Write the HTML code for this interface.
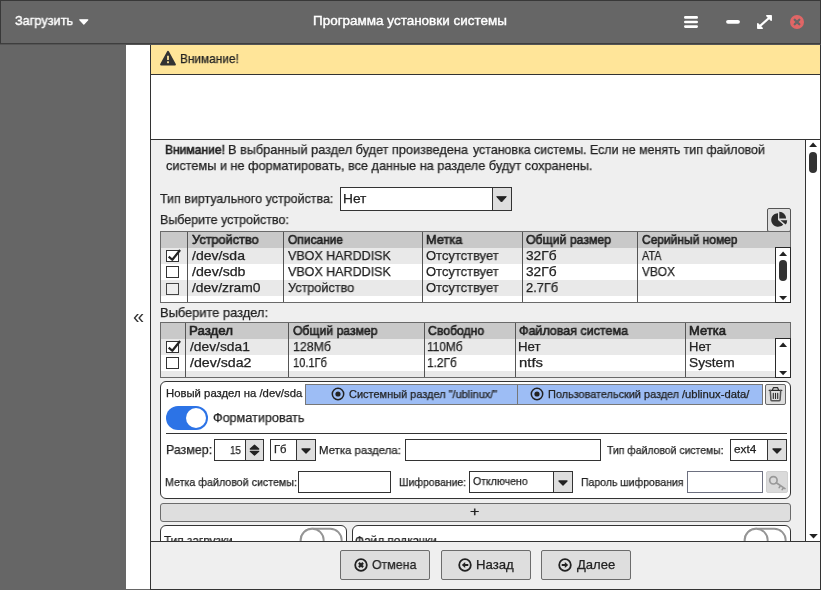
<!DOCTYPE html>
<html lang="ru"><head><meta charset="utf-8"><title>Программа установки системы</title>
<style>
*{box-sizing:border-box;margin:0;padding:0}
html,body{width:821px;height:590px;overflow:hidden;background:#666}
body{font-family:"Liberation Sans",sans-serif;font-size:13px;color:#222;position:relative}
.a{position:absolute;white-space:nowrap}
.t{position:absolute;white-space:nowrap;will-change:transform;line-height:16px;height:16px;transform-origin:0 50%;-webkit-text-stroke:0.25px currentColor}
#tb{left:0;top:0;width:821px;height:44px;background:#666;border:1px solid #383838;border-bottom-color:#3e3e3e}
#tb2{left:0;top:44px;width:821px;height:1px;background:#555}
#gap{left:126px;top:45px;width:24px;height:544px;background:#fff}
#main{left:150px;top:45px;width:671px;height:545px;background:#efefef;border:1px solid #333;border-top:0}
#warn{left:151px;top:45px;width:669px;height:30px;background:#ffe599;border-bottom:1px solid #333}
#white{left:151px;top:75px;width:669px;height:65px;background:#fff;border-bottom:1px solid #333}
#sb{left:805px;top:140px;width:15px;height:402px;background:#fff;border-left:1px solid #333}
#foot{left:151px;top:541px;width:669px;height:48px;background:#efefef;border-top:1px solid #333}
.btn{position:absolute;background:#dedede;border:1px solid #6c6c6c;border-radius:2px}
.inp{position:absolute;background:#fff;border:1px solid #333}
.cb{position:absolute;background:#dedede;border-left:1px solid #333;right:0;top:0;bottom:0}
.tbl{position:absolute;background:#fff;border:1px solid #6a6a6a}
.hd{position:absolute;background:#c9c9c9;left:0;right:0;top:0;height:16px}
.rw{position:absolute;background:#e9e9e9;left:0;right:0;height:16px}
.vl{position:absolute;top:0;bottom:0;width:1px;background:#555}
.card{position:absolute;background:#fff;border:1px solid #333;border-radius:6px}
.chk{position:absolute;width:13px;height:12px;border:1px solid #333;background:#fff}
svg{position:absolute;overflow:visible}
</style></head><body>
<div class="a" id="gap"></div>
<div class="a" id="main"></div>

<!-- titlebar -->
<div class="a" id="tb"></div><div class="a" id="tb2"></div>
<svg style="left:79px;top:19px" width="10" height="6"><path d="M0.800 0.800h8l-4 4.200z" fill="#fff" stroke="#fff" stroke-linejoin="round" stroke-width="1.200"/></svg>
<svg style="left:684px;top:15px" width="14" height="14"><path d="M1.300 2.400h11.400M1.300 7h11.400M1.300 11.600h11.400" stroke="#fff" stroke-width="2.600" stroke-linecap="round"/></svg>
<svg style="left:726px;top:19px" width="14" height="6"><path d="M2 2.800h10" stroke="#fff" stroke-width="3.800" stroke-linecap="round"/></svg>
<svg style="left:757px;top:15px" width="15" height="14"><path d="M9.800 0.800h4.400v4.400zM0.800 13.200v-4.400l4.400 4.400z" fill="#fff" stroke="#fff" stroke-width="1.500" stroke-linejoin="round"/><path d="M12 3l-9 8" stroke="#fff" stroke-width="2.300"/></svg>
<svg style="left:790px;top:15px" width="14" height="14"><circle cx="7" cy="7" r="7" fill="#e06666"/><path d="M4.700 4.700l4.600 4.600M9.300 4.700l-4.600 4.600" stroke="#666" stroke-width="2.300" stroke-linecap="round"/></svg>

<!-- warning -->
<div class="a" id="warn"></div>
<svg style="left:160px;top:50px" width="16" height="16"><path d="M8 2L14.800 14.500H1.200z" fill="#333" stroke="#333" stroke-width="2.200" stroke-linejoin="round"/><path d="M8 5.800v4.200" stroke="#ffe599" stroke-width="1.800"/><rect x="7.100" y="11.300" width="1.800" height="1.900" fill="#ffe599"/></svg>
<div class="a" id="white"></div>

<!-- combo 1 -->
<div class="inp" style="left:340px;top:187px;width:172px;height:24px"><div class="cb" style="width:19px"></div>
<svg style="right:4px;top:8px" width="11" height="7"><path d="M0.700 0.700h9.600l-4.800 5.300z" fill="#222" stroke="#222" stroke-linejoin="round"/></svg></div>
<div class="btn" style="left:767px;top:208px;width:24px;height:24px;border-color:#555"></div>
<svg style="left:0;top:0" width="821" height="590"><g fill="#2b2b2b"><path d="M778 220V213.200A6.800 6.800 0 1 0 783.200 224.400z"/><path d="M779.300 218.600V211.800A6.800 6.800 0 0 1 786.100 218.600z"/><path d="M780.500 220.200H787.200A6.800 6.800 0 0 1 785.600 224.600z"/></g></svg>

<!-- table 1 -->
<div class="tbl" id="t1" style="left:160px;top:231px;width:631px;height:72px">
  <div class="hd"></div>
  <div class="rw" style="top:16px"></div><div class="rw" style="top:48px"></div>
  <div class="vl" style="left:26px"></div><div class="vl" style="left:122px"></div><div class="vl" style="left:261px"></div><div class="vl" style="left:361px"></div><div class="vl" style="left:476px"></div>
  <div class="a" style="right:-1px;top:15px;bottom:-1px;width:16px;background:#fff;border:1px solid #2a2a2a"></div>
  <svg style="right:2.500px;top:18.500px" width="9" height="6"><path d="M0.100 4.900l4-4.300 4 4.300z" fill="#222"/></svg>
  <div class="a" style="right:3px;top:28px;width:8px;height:21px;background:#333;border-radius:4px"></div>
  <svg style="right:2.500px;bottom:1.500px" width="9" height="6"><path d="M0.100 1l4 4.300 4-4.300z" fill="#222"/></svg>
</div>
<div class="chk" style="left:166px;top:250px"></div>
<svg style="left:167px;top:248px" width="14" height="14"><path d="M1.700 8.600l3.600 3.200 7.800-9.800" fill="none" stroke="#222" stroke-width="2.200" stroke-linejoin="round"/></svg>
<div class="chk" style="left:166px;top:266px"></div>
<div class="chk" style="left:166px;top:283px;background:#eee;border-color:#444"></div>

<!-- table 2 -->
<div class="tbl" id="t2" style="left:160px;top:322px;width:631px;height:56px">
  <div class="hd"></div>
  <div class="rw" style="top:16px"></div><div class="rw" style="top:48px;height:6px"></div>
  <div class="vl" style="left:24px"></div><div class="vl" style="left:127px"></div><div class="vl" style="left:263px"></div><div class="vl" style="left:354px"></div><div class="vl" style="left:524px"></div>
  <div class="a" style="right:-1px;top:15px;bottom:-1px;width:16px;background:#fff;border:1px solid #2a2a2a"></div>
  <svg style="right:2.500px;top:18.500px" width="9" height="6"><path d="M0.100 4.900l4-4.300 4 4.300z" fill="#222"/></svg>
  <svg style="right:2.500px;bottom:1.500px" width="9" height="6"><path d="M0.100 1l4 4.300 4-4.300z" fill="#222"/></svg>
</div>
<div class="chk" style="left:166px;top:341px"></div>
<svg style="left:167px;top:339px" width="14" height="14"><path d="M1.700 8.600l3.600 3.200 7.800-9.800" fill="none" stroke="#222" stroke-width="2.200" stroke-linejoin="round"/></svg>
<div class="chk" style="left:166px;top:357px"></div>

<!-- card: new partition -->
<div class="card" style="left:160px;top:381px;width:631px;height:118px"></div>
<div class="a" style="left:305px;top:384px;width:458px;height:21px;background:#9dbdf5;border:1px solid #777"></div>
<div class="a" style="left:517px;top:385px;width:1px;height:19px;background:#777"></div>
<svg style="left:331px;top:387px" width="14" height="14"><circle cx="7" cy="7" r="5.700" fill="none" stroke="#222" stroke-width="1.500"/><circle cx="7" cy="7" r="2.600" fill="#222"/></svg>
<svg style="left:530px;top:387px" width="14" height="14"><circle cx="7" cy="7" r="5.700" fill="none" stroke="#222" stroke-width="1.500"/><circle cx="7" cy="7" r="2.600" fill="#222"/></svg>
<div class="btn" style="left:765px;top:384px;width:21px;height:21px;border-color:#666"></div>
<svg style="left:0;top:0" width="821" height="590"><g fill="none" stroke="#2b2b2b" stroke-width="1.200" stroke-linecap="round" stroke-linejoin="round"><path d="M769.200 390.400h12.600M772.300 390.200l1.200-2.600h4l1.200 2.600"/><path d="M770.300 390.600l0.600 9.200a1.200 1.200 0 0 0 1.200 1h6.800a1.200 1.200 0 0 0 1.200-1l0.600-9.200" stroke="#555" stroke-width="1.500"/><path d="M773.300 393.200v5.200M775.500 393.200v5.200M777.700 393.200v5.200" stroke-width="1.100"/></g></svg>

<div class="a" style="left:166px;top:406px;width:42px;height:24px;border-radius:12px;background:#2c73e6"></div>
<div class="a" style="left:185.700px;top:407.800px;width:20.200px;height:20.200px;border-radius:50%;background:#fff"></div>
<div class="a" style="left:166px;top:433px;width:621px;height:1px;background:#333"></div>

<div class="inp" style="left:214px;top:439px;width:50px;height:22px"><div class="cb" style="width:18px"></div>
<svg style="right:3px;top:3px" width="11" height="14"><path d="M1.300 6l4.200-3.800 4.200 3.800zM1.300 8.300l4.200 3.800 4.200-3.800z" fill="#222" stroke="#222" stroke-width="1.300" stroke-linejoin="round"/></svg></div>
<div class="inp" style="left:270px;top:439px;width:46px;height:22px"><div class="cb" style="width:19px"></div>
<svg style="right:4px;top:8px" width="10" height="6"><path d="M1 1h8l-4 4z" fill="#222" stroke="#222" stroke-width="1.300" stroke-linejoin="round"/></svg></div>
<div class="inp" style="left:405px;top:439px;width:196px;height:22px"></div>
<div class="inp" style="left:730px;top:439px;width:57px;height:22px"><div class="cb" style="width:19px"></div>
<svg style="right:4px;top:8px" width="10" height="6"><path d="M1 1h8l-4 4z" fill="#222" stroke="#222" stroke-width="1.300" stroke-linejoin="round"/></svg></div>

<div class="inp" style="left:298px;top:471px;width:93px;height:22px"></div>
<div class="inp" style="left:469px;top:471px;width:104px;height:22px"><div class="cb" style="width:19px"></div>
<svg style="right:4px;top:8px" width="10" height="6"><path d="M1 1h8l-4 4z" fill="#222" stroke="#222" stroke-width="1.300" stroke-linejoin="round"/></svg></div>
<div class="inp" style="left:687px;top:471px;width:76px;height:22px;border-color:#6d7080"></div>
<div class="btn" style="left:766px;top:471px;width:22px;height:22px;border-color:#d0d0d0;background:#dadada"></div>
<svg style="left:0;top:0" width="821" height="590"><g fill="none" stroke="#999" stroke-width="1.700" stroke-linecap="round"><circle cx="773.400" cy="480.300" r="3.700"/><path d="M776.300 482.800l8.700 5.800M780.500 485.600l-1.300 2M783.500 487.600l-1.300 2"/></g></svg>

<!-- plus bar -->
<div class="btn" style="left:160px;top:503px;width:631px;height:19px;border-radius:3px"></div>

<!-- lower cards (clipped by footer) -->
<div class="card" style="left:160px;top:525px;width:187px;height:40px"></div>
<div class="card" style="left:352px;top:525px;width:439px;height:40px"></div>
<svg style="left:0;top:0" width="821" height="590"><g fill="#fff" stroke="#959595" stroke-width="1.900"><rect x="300.700" y="528.700" width="41" height="23" rx="11.500"/><circle cx="312.200" cy="540.200" r="11.500"/><rect x="744.700" y="528.700" width="41" height="23" rx="11.500"/><circle cx="756.200" cy="540.200" r="11.500"/></g></svg>

<!-- main scrollbar -->
<div class="a" id="sb"></div>
<svg style="left:809px;top:142px" width="9" height="6"><path d="M0.100 4.900l4-4.300 4 4.300z" fill="#222"/></svg>
<div class="a" style="left:809px;top:151.500px;width:8px;height:21.500px;background:#333;border-radius:4px"></div>
<svg style="left:809px;top:533px" width="9" height="6"><path d="M0.200 1l4.300 4.600 4.300-4.600z" fill="#222"/></svg>

<!-- footer -->
<div class="a" id="foot"></div>
<div class="btn" style="left:340px;top:550px;width:90px;height:30px"></div>
<div class="btn" style="left:441px;top:550px;width:90px;height:30px"></div>
<div class="btn" style="left:541px;top:550px;width:90px;height:30px"></div>
<svg style="left:354.100px;top:557.800px" width="14" height="14"><circle cx="7" cy="7" r="5.800" fill="none" stroke="#222" stroke-width="1.800"/><path d="M4.900 4.900l4.200 4.200M9.100 4.900l-4.200 4.200" stroke="#222" stroke-width="2.200"/></svg>
<svg style="left:457.600px;top:557.800px" width="14" height="14"><circle cx="7" cy="7" r="5.800" fill="none" stroke="#222" stroke-width="1.800"/><path d="M10.300 7h-4" fill="none" stroke="#222" stroke-width="2"/><path d="M7.200 3.900v6.200l-3.400-3.100z" fill="#222"/></svg>
<svg style="left:557.600px;top:557.800px" width="14" height="14"><circle cx="7" cy="7" r="5.800" fill="none" stroke="#222" stroke-width="1.800"/><path d="M3.700 7h4" fill="none" stroke="#222" stroke-width="2"/><path d="M6.800 3.900v6.200l3.400-3.100z" fill="#222"/></svg>

<span class="t" id="x1" style="left:14.86px;top:13.3px;font-size:13px;color:#fff;-webkit-text-stroke-width:0.4px;transform:scaleX(0.9787);">Загрузить</span>
<span class="t" id="x2" style="left:313.12px;top:13.3px;font-size:13px;color:#fff;-webkit-text-stroke-width:0.4px;transform:scaleX(1.0363);">Программа установки системы</span>
<span class="t" id="x3" style="left:179.69px;top:50.5px;font-size:13px;transform:scaleX(0.9104);">Внимание!</span>
<span class="t" id="x4a" style="left:165.30px;top:142px;font-size:13px;-webkit-text-stroke-width:0.6px;transform:scaleX(0.9270);">Внимание!</span>
<span class="t" id="x4b" style="left:228.22px;top:142px;font-size:13px;transform:scaleX(0.9775);">В выбранный раздел будет произведена</span>
<span class="t" id="x4c" style="left:473.10px;top:142px;font-size:13px;transform:scaleX(0.9529);">установка системы. Если не менять тип файловой</span>
<span class="t" id="x5" style="left:165.51px;top:158px;font-size:13px;transform:scaleX(0.9760);">системы и не форматировать, все данные на разделе будут сохранены.</span>
<span class="t" id="x6" style="left:160.16px;top:191px;font-size:13px;transform:scaleX(0.9588);">Тип виртуального устройства:</span>
<span class="t" id="x7" style="left:343.14px;top:191px;font-size:13px;transform:scaleX(1.0571);">Нет</span>
<span class="t" id="x8" style="left:159.64px;top:211.6px;font-size:13px;transform:scaleX(0.9588);">Выберите устройство:</span>
<span class="t" id="h1" style="left:191.70px;top:232.4px;font-size:13px;-webkit-text-stroke-width:0.6px;transform:scaleX(0.9801);">Устройство</span>
<span class="t" id="h2" style="left:287.67px;top:232.4px;font-size:13px;-webkit-text-stroke-width:0.6px;transform:scaleX(0.9198);">Описание</span>
<span class="t" id="h3" style="left:425.96px;top:232.4px;font-size:13px;-webkit-text-stroke-width:0.6px;transform:scaleX(0.9836);">Метка</span>
<span class="t" id="h4" style="left:526.36px;top:232.4px;font-size:13px;-webkit-text-stroke-width:0.6px;transform:scaleX(0.9453);">Общий размер</span>
<span class="t" id="h5" style="left:641.67px;top:232.4px;font-size:13px;-webkit-text-stroke-width:0.6px;transform:scaleX(0.9223);">Серийный номер</span>
<span class="t" id="r11" style="left:191.97px;top:248.4px;font-size:13px;transform:scaleX(1.0768);">/dev/sda</span>
<span class="t" id="r12" style="left:287.90px;top:248.4px;font-size:13px;transform:scaleX(0.9617);">VBOX HARDDISK</span>
<span class="t" id="r13" style="left:426.20px;top:248.4px;font-size:13px;transform:scaleX(0.9952);">Отсутствует</span>
<span class="t" id="r14" style="left:526.07px;top:248.4px;font-size:13px;transform:scaleX(1.0536);">32Гб</span>
<span class="t" id="r15" style="left:641.90px;top:248.4px;font-size:13px;transform:scaleX(0.8340);">ATA</span>
<span class="t" id="r21" style="left:191.97px;top:264.4px;font-size:13px;transform:scaleX(1.0878);">/dev/sdb</span>
<span class="t" id="r22" style="left:287.90px;top:264.4px;font-size:13px;transform:scaleX(0.9617);">VBOX HARDDISK</span>
<span class="t" id="r23" style="left:426.20px;top:264.4px;font-size:13px;transform:scaleX(0.9952);">Отсутствует</span>
<span class="t" id="r24" style="left:526.07px;top:264.4px;font-size:13px;transform:scaleX(1.0536);">32Гб</span>
<span class="t" id="r25" style="left:641.90px;top:264.4px;font-size:13px;transform:scaleX(0.9111);">VBOX</span>
<span class="t" id="r31" style="left:191.97px;top:280.4px;font-size:13px;transform:scaleX(1.0661);">/dev/zram0</span>
<span class="t" id="r32" style="left:287.66px;top:280.4px;font-size:13px;transform:scaleX(0.9740);">Устройство</span>
<span class="t" id="r33" style="left:426.20px;top:280.4px;font-size:13px;transform:scaleX(0.9952);">Отсутствует</span>
<span class="t" id="r34" style="left:526.11px;top:280.4px;font-size:13px;transform:scaleX(0.9890);">2.7Гб</span>
<span class="t" id="x9" style="left:159.51px;top:304.6px;font-size:13px;transform:scaleX(0.9883);">Выберите раздел:</span>
<span class="t" id="g1" style="left:189.23px;top:323.4px;font-size:13px;-webkit-text-stroke-width:0.6px;transform:scaleX(1.0217);">Раздел</span>
<span class="t" id="g2" style="left:293.07px;top:323.4px;font-size:13px;-webkit-text-stroke-width:0.6px;transform:scaleX(0.9385);">Общий размер</span>
<span class="t" id="g3" style="left:427.56px;top:323.4px;font-size:13px;-webkit-text-stroke-width:0.6px;transform:scaleX(0.9401);">Свободно</span>
<span class="t" id="g4" style="left:518.92px;top:323.4px;font-size:13px;-webkit-text-stroke-width:0.6px;transform:scaleX(0.9607);">Файловая система</span>
<span class="t" id="g5" style="left:688.85px;top:323.4px;font-size:13px;-webkit-text-stroke-width:0.6px;transform:scaleX(0.9973);">Метка</span>
<span class="t" id="q11" style="left:190.27px;top:339.4px;font-size:13px;transform:scaleX(1.0607);">/dev/sda1</span>
<span class="t" id="q12" style="left:292.59px;top:339.4px;font-size:13px;transform:scaleX(0.9497);">128Мб</span>
<span class="t" id="q13" style="left:427.12px;top:339.4px;font-size:13px;transform:scaleX(0.9113);">110Мб</span>
<span class="t" id="q14" style="left:518.38px;top:339.4px;font-size:13px;transform:scaleX(1.0190);">Нет</span>
<span class="t" id="q15" style="left:688.61px;top:339.4px;font-size:13px;transform:scaleX(0.9905);">Нет</span>
<span class="t" id="q21" style="left:190.27px;top:355.4px;font-size:13px;transform:scaleX(1.0893);">/dev/sda2</span>
<span class="t" id="q22" style="left:292.66px;top:355.4px;font-size:13px;transform:scaleX(0.8545);">10.1Гб</span>
<span class="t" id="q23" style="left:427.11px;top:355.4px;font-size:13px;transform:scaleX(0.9175);">1.2Гб</span>
<span class="t" id="q24" style="left:518.54px;top:355.4px;font-size:13px;transform:scaleX(1.1443);">ntfs</span>
<span class="t" id="q25" style="left:689.07px;top:355.4px;font-size:13px;transform:scaleX(1.0524);">System</span>
<span class="t" id="c1" style="left:165.63px;top:385px;font-size:11px;transform:scaleX(1.0292);">Новый раздел на /dev/sda</span>
<span class="t" id="c2" style="left:349.00px;top:386px;font-size:11px;transform:scaleX(0.9966);">Системный раздел "/ublinux/"</span>
<span class="t" id="c3" style="left:547.56px;top:386px;font-size:11px;transform:scaleX(0.9890);">Пользовательский раздел</span>
<span class="t" id="c3b" style="left:682.36px;top:386px;font-size:11px;transform:scaleX(1.0211);">/ublinux-data/</span>
<span class="t" id="c4" style="left:213.11px;top:410px;font-size:13px;transform:scaleX(0.9701);">Форматировать</span>
<span class="t" id="c5" style="left:165.85px;top:442px;font-size:13px;transform:scaleX(0.9535);">Размер:</span>
<span class="t" id="c6" style="left:229.63px;top:441.5px;font-size:11px;transform:scaleX(0.8978);">15</span>
<span class="t" id="c7" style="left:273.63px;top:441px;font-size:11px;transform:scaleX(1.0222);">Гб</span>
<span class="t" id="c8" style="left:319.46px;top:441.7px;font-size:11.5px;transform:scaleX(0.9914);">Метка раздела:</span>
<span class="t" id="c9" style="left:607.30px;top:441.7px;font-size:11.5px;transform:scaleX(0.9057);">Тип файловой системы:</span>
<span class="t" id="c10" style="left:734.14px;top:441px;font-size:11.5px;transform:scaleX(1.0259);">ext4</span>
<span class="t" id="d1" style="left:165.30px;top:473.7px;font-size:11.5px;transform:scaleX(0.9274);">Метка файловой системы:</span>
<span class="t" id="d2" style="left:399.42px;top:473.7px;font-size:11.5px;transform:scaleX(0.9080);">Шифрование:</span>
<span class="t" id="d3" style="left:473.22px;top:473px;font-size:11px;transform:scaleX(0.9582);">Отключено</span>
<span class="t" id="d4" style="left:580.52px;top:473.7px;font-size:11.5px;transform:scaleX(0.9117);">Пароль шифрования</span>
<span class="t" id="p1" style="left:470.08px;top:504px;font-size:13px;transform:scaleX(1.2308);">+</span>
<span class="t" id="l1" style="left:163.87px;top:532.6px;font-size:13px;height:8.4px;overflow:hidden;transform:scaleX(0.9070);">Тип загрузки</span>
<span class="t" id="l2" style="left:355.34px;top:532.6px;font-size:13px;height:8.4px;overflow:hidden;transform:scaleX(0.9119);">Файл подкачки</span>
<span class="t" id="ch" style="left:132.97px;top:308.2px;font-size:20px;-webkit-text-stroke-width:0;color:#333;transform:scaleX(0.9789);">«</span>
<span class="t" id="f1" style="left:372.02px;top:556.5px;font-size:13px;transform:scaleX(0.9514);">Отмена</span>
<span class="t" id="f2" style="left:475.88px;top:556.8px;font-size:13px;transform:scaleX(1.0152);">Назад</span>
<span class="t" id="f3" style="left:576.70px;top:556.8px;font-size:13px;transform:scaleX(1.0040);">Далее</span>
</body></html>
